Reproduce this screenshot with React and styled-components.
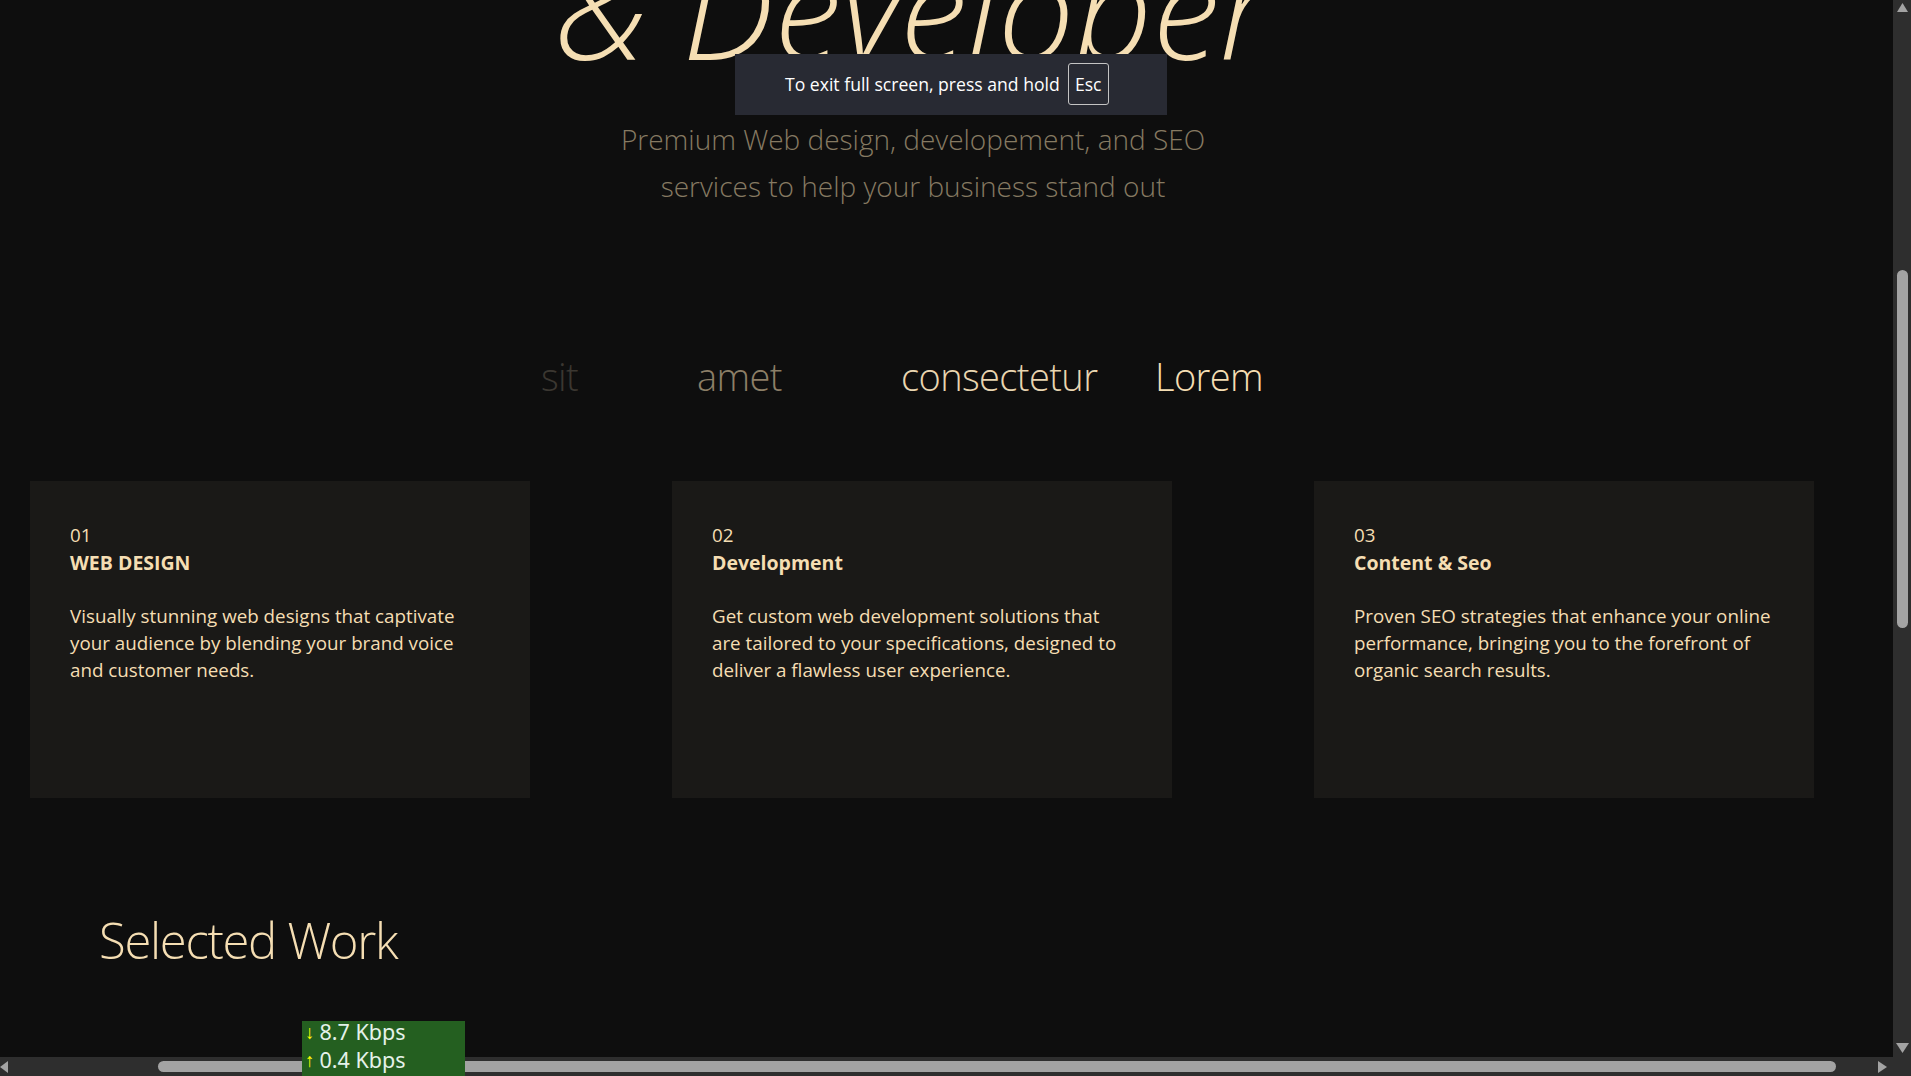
import React from 'react';
import styled, { createGlobalStyle } from 'styled-components';

const GlobalStyle = createGlobalStyle`
  html, body {
    margin: 0;
    padding: 0;
    overflow: hidden;
    background: #0e0e0e;
    font-family: 'Open Sans', 'Noto Sans', sans-serif;
    color: #f5deb3;
  }
`;

const Page = styled.div`
  width: 1893px;
  height: 1058px;
  overflow: hidden;
  background: #0e0e0e;
`;

const Hero = styled.section`
  width: 1826px;
  display: flex;
  flex-direction: column;
  align-items: center;
  text-align: center;
`;

const Title = styled.h1`
  margin: -60px 0 0;
  font-size: 136px;
  line-height: 1;
  font-weight: 300;
  font-style: italic;
  color: #f5deb3;
  white-space: nowrap;
`;

const Subtitle = styled.p`
  margin: 40px 0 0;
  font-size: 28px;
  line-height: 47px;
  font-weight: 300;
  color: #867a62;
`;

const Marquee = styled.div`
  display: flex;
  margin: 142px 0 0 541px;
  font-size: 38px;
  line-height: 48px;
  letter-spacing: -0.6px;
  font-weight: 300;
  white-space: nowrap;
`;

const Word = styled.span`
  flex: 0 0 ${(p) => (p.$w ? `${p.$w}px` : 'auto')};
  color: ${(p) => p.$c};
`;

const Cards = styled.div`
  display: grid;
  grid-template-columns: repeat(3, 500px);
  column-gap: 142px;
  margin: 81px 0 0 30px;
`;

const Card = styled.article`
  height: 317px;
  box-sizing: border-box;
  padding: 41px 41px 40px 40px;
  background: #1a1917;
  font-size: 18.8px;
  line-height: 27px;
  color: #f5deb3;
`;

const Num = styled.div`
  font-weight: 400;
`;

const CardTitle = styled.h3`
  margin: 0 0 27px;
  font-size: 19.5px;
  line-height: 27px;
  font-weight: 700;
`;

const CardText = styled.p`
  margin: 0;
`;

const SectionTitle = styled.h2`
  margin: 111px 0 0 99px;
  font-size: 49px;
  line-height: 62px;
  letter-spacing: -1.3px;
  font-weight: 300;
  color: #f5deb3;
`;

const Toast = styled.div`
  position: fixed;
  left: 735px;
  top: 54px;
  width: 432px;
  height: 61px;
  box-sizing: border-box;
  padding: 0 0 1px 50px;
  display: flex;
  align-items: center;
  gap: 8px;
  background: #282a33;
  color: #fff;
  font-size: 17.6px;
`;

const Key = styled.span`
  display: flex;
  align-items: center;
  justify-content: center;
  width: 41px;
  height: 42px;
  box-sizing: border-box;
  border: 1px solid #c4c4c4;
  border-radius: 3px;
`;

const Speed = styled.div`
  position: fixed;
  left: 302px;
  bottom: 0;
  width: 163px;
  height: 55px;
  box-sizing: border-box;
  padding-left: 3px;
  overflow: hidden;
  background: #245f20;
  color: #e4f2ea;
  font-family: 'Noto Sans', 'Open Sans', sans-serif;
  font-size: 21.5px;
  line-height: 28px;
  z-index: 3;
`;

const SpeedRow = styled.div`
  display: flex;
  align-items: center;
  gap: 5px;

  &:first-child {
    margin-top: -3px;
  }
`;

const Arrow = styled.span`
  color: #ffff00;
  font-size: 19px;
  font-weight: 700;
`;

const VBar = styled.div`
  position: fixed;
  right: 0;
  top: 0;
  width: 18px;
  height: 1058px;
  box-sizing: border-box;
  padding: 3px 0 5px;
  display: flex;
  flex-direction: column;
  align-items: center;
  background: #2e2e2e;
  z-index: 2;
`;

const VThumb = styled.div`
  flex: 0 0 358px;
  width: 11px;
  margin: 258px 0 auto;
  border-radius: 6px;
  background: #a3a3a3;
`;

const HBar = styled.div`
  position: fixed;
  left: 0;
  bottom: 0;
  width: 1911px;
  height: 19px;
  box-sizing: border-box;
  padding: 0 24px 0 0;
  display: flex;
  align-items: center;
  background: #2e2e2e;
  z-index: 2;
`;

const HThumb = styled.div`
  flex: 0 0 1678px;
  height: 11px;
  margin: 0 auto 0 150px;
  border-radius: 6px;
  background: #a3a3a3;
`;

const marquee = [
  { t: 'sit', w: 156, c: '#3b3731' },
  { t: 'amet', w: 204, c: '#8c7f67' },
  { t: 'consectetur', w: 254, c: '#e9d6b1' },
  { t: 'Lorem', c: '#f5deb3' },
];

const services = [
  {
    n: '01',
    title: 'WEB DESIGN',
    text: 'Visually stunning web designs that captivate your audience by blending your brand voice and customer needs.',
  },
  {
    n: '02',
    title: 'Development',
    text: 'Get custom web development solutions that are tailored to your specifications, designed to deliver a flawless user experience.',
  },
  {
    n: '03',
    title: 'Content & Seo',
    text: 'Proven SEO strategies that enhance your online performance, bringing you to the forefront of organic search results.',
  },
];

export default function App() {
  return (
    <>
      <GlobalStyle />
      <Page>
        <Hero>
          <Title>&amp; Developer</Title>
          <Subtitle>
            Premium Web design, developement, and SEO
            <br />
            services to help your business stand out
          </Subtitle>
        </Hero>

        <Marquee>
          {marquee.map((m) => (
            <Word key={m.t} $w={m.w} $c={m.c}>
              {m.t}
            </Word>
          ))}
        </Marquee>

        <Cards>
          {services.map((s) => (
            <Card key={s.n}>
              <Num>{s.n}</Num>
              <CardTitle>{s.title}</CardTitle>
              <CardText>{s.text}</CardText>
            </Card>
          ))}
        </Cards>

        <SectionTitle>Selected Work</SectionTitle>
      </Page>

      <Toast>
        To exit full screen, press and hold <Key>Esc</Key>
      </Toast>

      <VBar>
        <svg width="11" height="9" viewBox="0 0 11 9">
          <polygon points="5.5,0 11,9 0,9" fill="#a3a3a3" />
        </svg>
        <VThumb />
        <svg width="13" height="10" viewBox="0 0 13 10">
          <polygon points="0,0 13,0 6.5,10" fill="#a3a3a3" />
        </svg>
      </VBar>

      <HBar>
        <svg width="8" height="12" viewBox="0 0 8 12">
          <polygon points="8,0 8,12 0,6" fill="#a3a3a3" />
        </svg>
        <HThumb />
        <svg width="9" height="12" viewBox="0 0 9 12">
          <polygon points="0,0 9,6 0,12" fill="#a3a3a3" />
        </svg>
      </HBar>

      <Speed>
        <SpeedRow>
          <Arrow>↓</Arrow>8.7 Kbps
        </SpeedRow>
        <SpeedRow>
          <Arrow>↑</Arrow>0.4 Kbps
        </SpeedRow>
      </Speed>
    </>
  );
}
